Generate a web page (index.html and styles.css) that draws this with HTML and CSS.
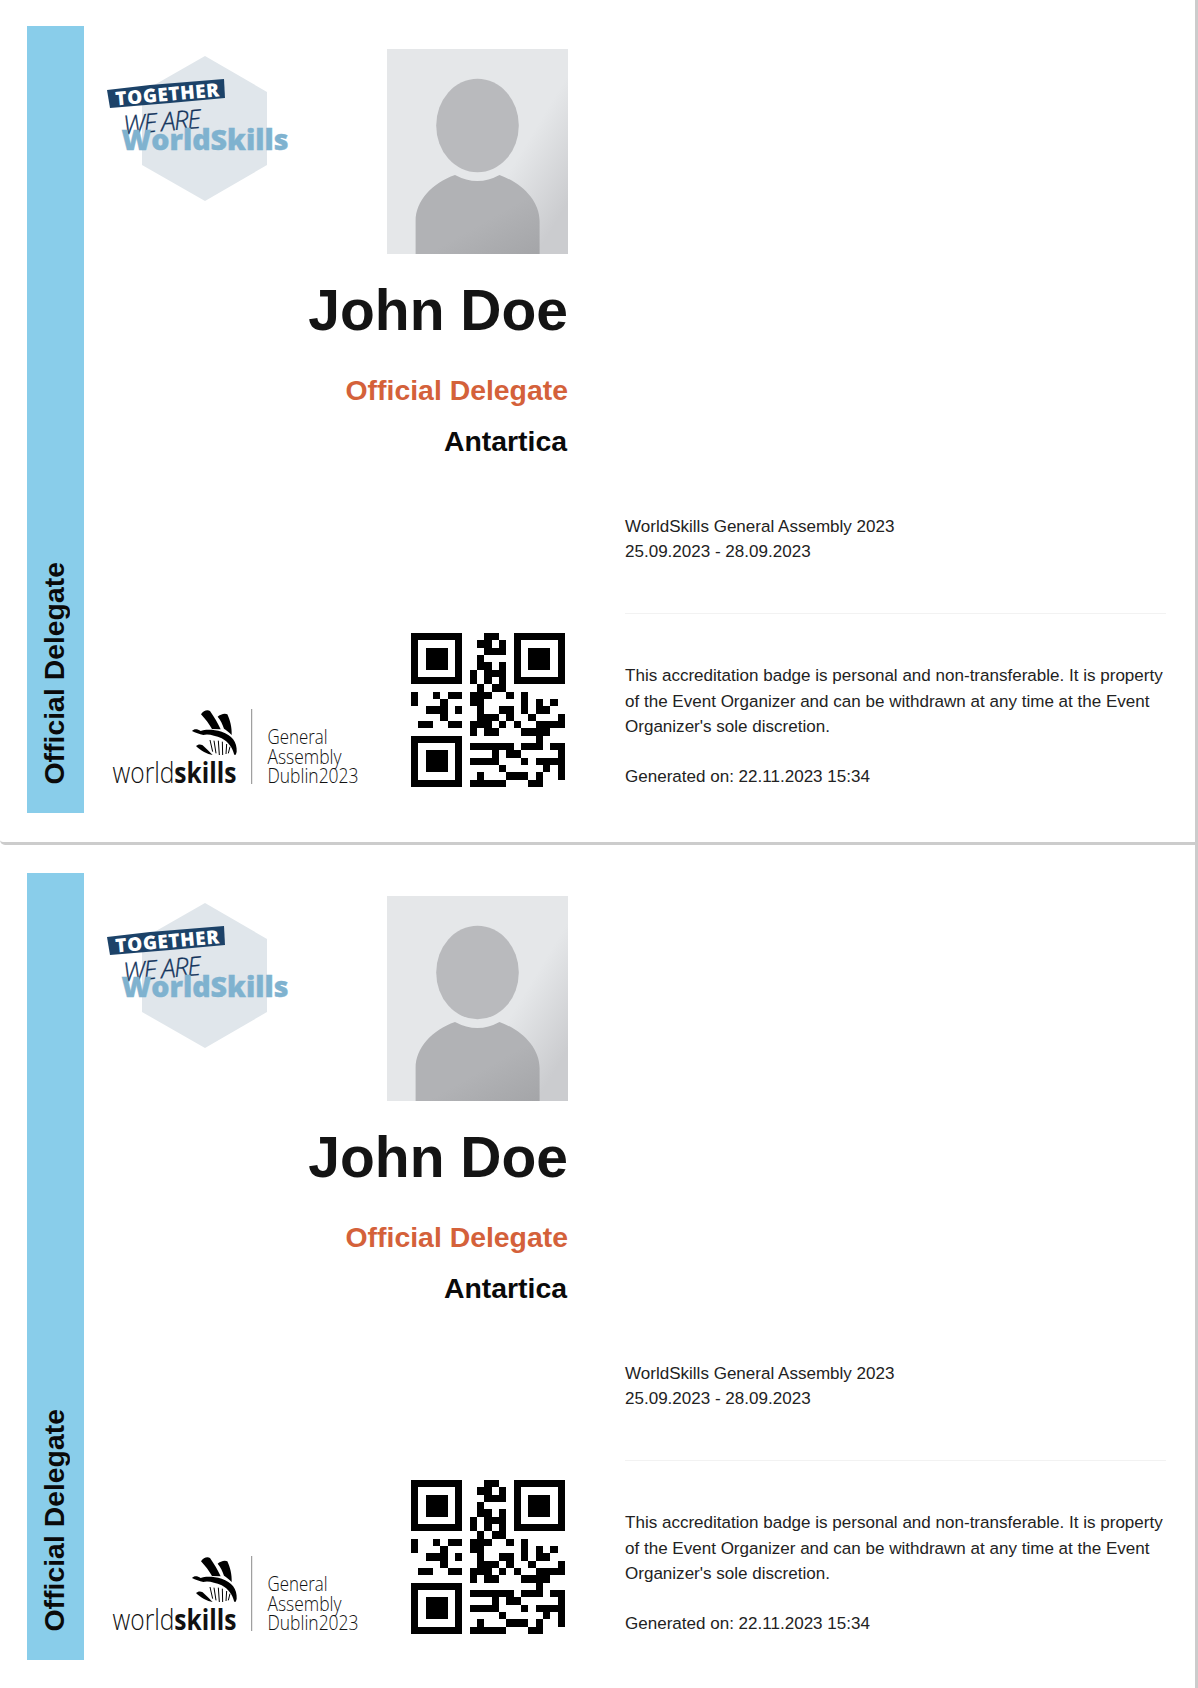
FILE: index.html
```html
<!DOCTYPE html>
<html lang="en">
<head>
  <meta charset="UTF-8" />
  <title>Accreditation badges</title>
  <link rel="stylesheet" href="styles.css">
</head>
<body>
  <!-- shared drawings, used by both badges -->
  <svg class="defs" width="0" height="0">
    <defs>
      <linearGradient id="photo-bg" x1="0.35" y1="0.3" x2="1" y2="0.75">
        <stop offset="0.55" stop-color="#e5e7e9"/>
        <stop offset="1" stop-color="#cbcccf"/>
      </linearGradient>
      <linearGradient id="photo-body" x1="0.2" y1="0.1" x2="1" y2="1">
        <stop offset="0.5" stop-color="#b1b2b5"/>
        <stop offset="1" stop-color="#a4a5a8"/>
      </linearGradient>
      <symbol id="photo" viewBox="0 0 181 205">
        <rect width="181" height="205" fill="url(#photo-bg)"/>
        <ellipse cx="90.5" cy="76.5" rx="41.3" ry="46.8" fill="#b9babd"/>
        <path d="M28.6 205V172C28.6 152 45 134 68 126Q90.5 138 112.5 126C135 134 152.6 152 152.6 172V205Z" fill="url(#photo-body)"/>
      </symbol>
      <symbol id="hand" viewBox="0 0 900 600">
        <path d="M333 283C340 272 352 268 360 273C372 290 384 310 392 328L366 327C358 312 345 296 333 283Z"/>
        <path d="M383 290C390 283 405 278 412 283C420 300 426 322 425 345C417 335 407 330 402 326C398 314 392 300 383 290Z"/>
        <path d="M306 333C312 326 322 326 332 333C345 328 370 328 395 335C425 345 442 365 440 395C438 405 434 408 432 402C428 385 415 365 395 355C375 346 352 340 340 345C328 342 316 338 306 333Z"/>
        <path d="M318 378C324 372 332 372 338 376C348 385 358 395 368 405C352 403 332 392 318 378Z"/>
        <path d="M360 360L368 395M372 362L378 400M385 362L388 405M397 365L398 405M410 372L408 402M420 380L415 400" fill="none" stroke="#000" stroke-width="3"/>
      </symbol>
      <symbol id="qr" viewBox="0 0 21 21" shape-rendering="crispEdges">
        <path d="M0 0h7v7h-7zM1 1v5h5v-5zM2 2h3v3h-3zM14 0h7v7h-7zM15 1v5h5v-5zM16 2h3v3h-3zM0 14h7v7h-7zM1 15v5h5v-5zM2 16h3v3h-3z" fill-rule="evenodd"/>
        <path d="M10 0h2v1h-2zM9 1h2v1h-2zM12 1h1v1h-1zM10 2h3v1h-3zM9 3h1v1h-1zM9 4h2v1h-2zM12 4h1v1h-1zM8 5h1v1h-1zM10 5h3v1h-3zM8 6h1v1h-1zM10 6h1v1h-1zM12 6h1v1h-1zM9 7h1v1h-1zM11 7h2v1h-2z"/>
        <path d="M0 8h1v1h-1zM3 8h1v1h-1zM5 8h2v1h-2zM8 8h3v1h-3zM13 8h1v1h-1zM15 8h1v1h-1z"/>
        <path d="M0 9h1v1h-1zM4 9h1v1h-1zM8 9h2v1h-2zM15 9h1v1h-1zM17 9h1v1h-1zM19 9h1v1h-1z"/>
        <path d="M2 10h3v1h-3zM6 10h1v1h-1zM9 10h1v1h-1zM12 10h2v1h-2zM15 10h1v1h-1zM17 10h2v1h-2z"/>
        <path d="M4 11h1v1h-1zM9 11h3v1h-3zM13 11h1v1h-1zM16 11h1v1h-1zM20 11h1v1h-1z"/>
        <path d="M1 12h2v1h-2zM5 12h2v1h-2zM8 12h3v1h-3zM12 12h1v1h-1zM14 12h1v1h-1zM17 12h4v1h-4z"/>
        <path d="M8 13h1v1h-1zM10 13h2v1h-2zM15 13h4v1h-4zM17 14h1v1h-1z"/>
        <path d="M8 15h6v1h-6zM15 15h3v1h-3zM19 15h2v1h-2z"/>
        <path d="M11 16h1v1h-1zM13 16h2v1h-2zM20 16h1v1h-1z"/>
        <path d="M8 17h4v1h-4zM15 17h1v1h-1zM17 17h4v1h-4z"/>
        <path d="M12 18h1v1h-1zM18 18h1v1h-1zM20 18h1v1h-1z"/>
        <path d="M9 19h1v1h-1zM13 19h3v1h-3zM17 19h1v1h-1zM20 19h1v1h-1z"/>
        <path d="M8 20h5v1h-5zM16 20h2v1h-2z"/>
      </symbol>
    </defs>
  </svg>

  <div class="badge">
    <div class="side-bar"><span>Official Delegate</span></div>
    <div class="left-col">
      <div class="top-row">
        <svg class="together-logo" viewBox="90 50 210 160">
          <polygon points="205,56 267,92 267,165 205,201 142,165 142,92" fill="#e0e6eb"/>
          <polygon points="107,90 150,85 224,79 225,98 170,103 110,108" fill="#1c4268"/>
          <text class="tg-banner" x="116" y="105.5" textLength="104" transform="rotate(-5 116 105.5)">TOGETHER</text>
          <text class="tg-weare" x="124" y="134.5" textLength="78" transform="rotate(-5 124 134.5)">WE ARE</text>
          <text class="tg-ws" x="121.5" y="150" textLength="167" lengthAdjust="spacingAndGlyphs">WorldSkills</text>
        </svg>
        <svg class="photo"><use href="#photo"/></svg>
      </div>
      <div class="person-name">John Doe</div>
      <div class="person-role">Official Delegate</div>
      <div class="person-country">Antartica</div>
      <div class="bottom-row">
        <svg class="ws-logo" viewBox="100 633 280 153">
          <use href="#hand" x="90" y="620" width="300" height="200"/>
          <text class="ws-word" x="112.5" y="783" textLength="124" lengthAdjust="spacingAndGlyphs"><tspan>world</tspan><tspan class="ws-bold">skills</tspan></text>
          <line x1="251.7" y1="709" x2="251.7" y2="784" stroke="#8a8a8a"/>
          <text class="ws-event" x="267.5" y="744" textLength="60" lengthAdjust="spacingAndGlyphs">General</text>
          <text class="ws-event" x="267.5" y="764" textLength="74" lengthAdjust="spacingAndGlyphs">Assembly</text>
          <text class="ws-event" x="267.5" y="783" textLength="91" lengthAdjust="spacingAndGlyphs">Dublin2023</text>
        </svg>
        <svg class="qr"><use href="#qr"/></svg>
      </div>
    </div>
    <div class="right-col">
      <div class="event-info">
        <div>WorldSkills General Assembly 2023</div>
        <div>25.09.2023 - 28.09.2023</div>
      </div>
      <div class="notice">
        <p>This accreditation badge is personal and non-transferable. It is property of the Event Organizer and can be withdrawn at any time at the Event Organizer's sole discretion.</p>
        <p>Generated on: 22.11.2023 15:34</p>
      </div>
    </div>
  </div>

  <div class="badge">
    <div class="side-bar"><span>Official Delegate</span></div>
    <div class="left-col">
      <div class="top-row">
        <svg class="together-logo" viewBox="90 50 210 160">
          <polygon points="205,56 267,92 267,165 205,201 142,165 142,92" fill="#e0e6eb"/>
          <polygon points="107,90 150,85 224,79 225,98 170,103 110,108" fill="#1c4268"/>
          <text class="tg-banner" x="116" y="105.5" textLength="104" transform="rotate(-5 116 105.5)">TOGETHER</text>
          <text class="tg-weare" x="124" y="134.5" textLength="78" transform="rotate(-5 124 134.5)">WE ARE</text>
          <text class="tg-ws" x="121.5" y="150" textLength="167" lengthAdjust="spacingAndGlyphs">WorldSkills</text>
        </svg>
        <svg class="photo"><use href="#photo"/></svg>
      </div>
      <div class="person-name">John Doe</div>
      <div class="person-role">Official Delegate</div>
      <div class="person-country">Antartica</div>
      <div class="bottom-row">
        <svg class="ws-logo" viewBox="100 633 280 153">
          <use href="#hand" x="90" y="620" width="300" height="200"/>
          <text class="ws-word" x="112.5" y="783" textLength="124" lengthAdjust="spacingAndGlyphs"><tspan>world</tspan><tspan class="ws-bold">skills</tspan></text>
          <line x1="251.7" y1="709" x2="251.7" y2="784" stroke="#8a8a8a"/>
          <text class="ws-event" x="267.5" y="744" textLength="60" lengthAdjust="spacingAndGlyphs">General</text>
          <text class="ws-event" x="267.5" y="764" textLength="74" lengthAdjust="spacingAndGlyphs">Assembly</text>
          <text class="ws-event" x="267.5" y="783" textLength="91" lengthAdjust="spacingAndGlyphs">Dublin2023</text>
        </svg>
        <svg class="qr"><use href="#qr"/></svg>
      </div>
    </div>
    <div class="right-col">
      <div class="event-info">
        <div>WorldSkills General Assembly 2023</div>
        <div>25.09.2023 - 28.09.2023</div>
      </div>
      <div class="notice">
        <p>This accreditation badge is personal and non-transferable. It is property of the Event Organizer and can be withdrawn at any time at the Event Organizer's sole discretion.</p>
        <p>Generated on: 22.11.2023 15:34</p>
      </div>
    </div>
  </div>
</body>
</html>
```

FILE: styles.css
```css
html {
  background: #fff;
}
body {
  margin: 0;
  padding-top: 26px;
  box-sizing: border-box;
  width: 1198px;
  min-height: 1688px;
  border-right: 3px solid #ccc;
  font-family: "Liberation Sans", Arial, sans-serif;
  color: #111;
  background: #fff;
}
.defs {
  position: absolute;
}
.badge {
  display: flex;
  padding: 0 0 29px 27px;
  margin-bottom: 28px;
  border-bottom: 3px solid #ccc;
  border-bottom-left-radius: 5px;
}
.badge:last-child {
  padding-bottom: 28px;
  margin-bottom: 0;
  border-bottom: none;
}
.side-bar {
  width: 57px;
  height: 787px;
  background: #89cdea;
  display: flex;
  justify-content: center;
  align-items: flex-end;
  padding: 0 3px 29px 0;
  box-sizing: border-box;
}
.side-bar span {
  writing-mode: vertical-rl;
  transform: rotate(180deg);
  font-size: 28.4px;
  font-weight: bold;
  line-height: 32px;
  white-space: nowrap;
  color: #0a0a0a;
}
.left-col {
  width: 483px;
  height: 787px;
  display: flex;
  flex-direction: column;
  text-align: right;
}
.top-row {
  display: flex;
  justify-content: space-between;
  padding-top: 23px;
}
.together-logo {
  width: 210px;
  height: 160px;
  margin: 1px 0 0 6px;
}
.photo {
  width: 181px;
  height: 205px;
  margin-right: -1px;
}
.person-name {
  margin: 24px -1px 0 0;
  font-size: 57px;
  line-height: 65px;
  font-weight: bold;
  color: #141414;
}
.person-role {
  margin: 31px -1px 0 0;
  font-size: 28.4px;
  line-height: 33px;
  font-weight: bold;
  color: #d4613a;
}
.person-country {
  margin-top: 18px;
  font-size: 28.4px;
  line-height: 33px;
  font-weight: bold;
  color: #0a0a0a;
}
.bottom-row {
  display: flex;
  align-items: flex-start;
  margin-top: auto;
  margin-left: 16px;
  margin-bottom: 26px;
}
.ws-logo {
  width: 280px;
  height: 153px;
}
.qr {
  width: 154px;
  height: 154px;
  margin-left: 31px;
}
.tg-banner {
  font-family: "Open Sans", sans-serif;
  font-size: 19px;
  font-weight: 800;
  fill: #fff;
}
.tg-weare {
  font-family: "Open Sans", sans-serif;
  font-size: 26px;
  font-style: italic;
  font-weight: 300;
  fill: #12335c;
  stroke: #12335c;
  stroke-width: 0.3;
}
.tg-ws {
  font-family: "Open Sans", sans-serif;
  font-size: 28px;
  font-weight: 800;
  fill: #7fb2cf;
  stroke: #7fb2cf;
  stroke-width: 0.4;
}
.ws-word {
  font-family: "Open Sans", sans-serif;
  font-size: 29px;
  font-weight: 300;
  fill: #111;
}
.ws-bold {
  font-weight: 700;
}
.ws-event {
  font-family: "Open Sans", sans-serif;
  font-size: 19.5px;
  font-weight: 300;
  fill: #111;
}
.right-col {
  width: 541px;
  margin-left: 58px;
  font-size: 17.05px;
  line-height: 25.5px;
  color: #222;
}
.event-info {
  margin-top: 487.5px;
  padding-bottom: 48.5px;
  border-bottom: 1px solid #f2f2f2;
}
.notice {
  padding-top: 49px;
}
.notice p {
  margin: 0 0 24px;
}
```
